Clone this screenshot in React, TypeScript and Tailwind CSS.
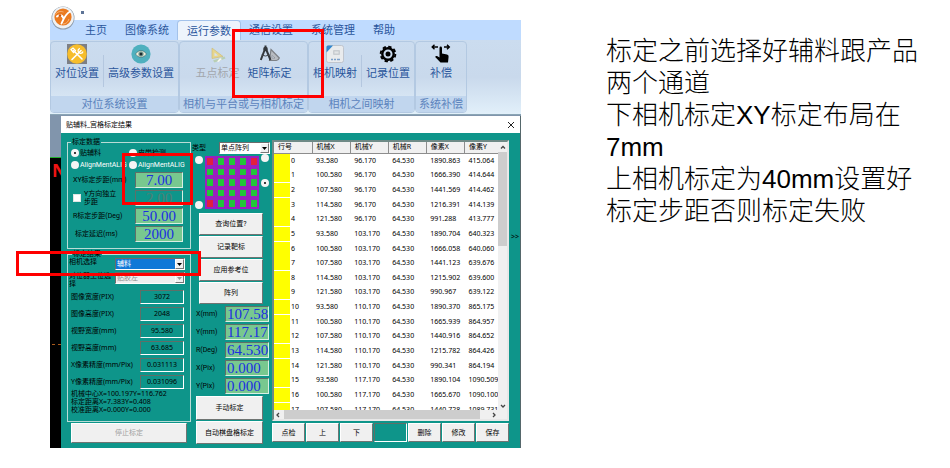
import { ReactNode } from 'react';
import clsx from 'clsx';

const tabs = ['主页', '图像系统', '运行参数', '通信设置', '系统管理', '帮助'];

const columns = ['行号', '机械X', '机械Y', '机械R', '像素X', '像素Y'];

const rows = [
  ['93.580', '96.170', '64.530', '1890.863', '415.064'],
  ['100.580', '96.170', '64.530', '1666.390', '414.644'],
  ['107.580', '96.170', '64.530', '1441.569', '414.462'],
  ['114.580', '96.170', '64.530', '1216.391', '414.139'],
  ['121.580', '96.170', '64.530', '991.288', '413.777'],
  ['93.580', '103.170', '64.530', '1890.704', '640.323'],
  ['100.580', '103.170', '64.530', '1666.058', '640.060'],
  ['107.580', '103.170', '64.530', '1441.123', '639.676'],
  ['114.580', '103.170', '64.530', '1215.902', '639.600'],
  ['121.580', '103.170', '64.530', '990.967', '639.122'],
  ['93.580', '110.170', '64.530', '1890.370', '865.175'],
  ['100.580', '110.170', '64.530', '1665.939', '864.957'],
  ['107.580', '110.170', '64.530', '1440.916', '864.652'],
  ['114.580', '110.170', '64.530', '1215.782', '864.426'],
  ['121.580', '110.170', '64.530', '990.341', '864.194'],
  ['93.580', '117.170', '64.530', '1890.104', '1090.509'],
  ['100.580', '117.170', '64.530', '1665.670', '1090.100'],
  ['107.580', '117.170', '64.530', '1440.728', '1089.731'],
];

const results = [
  ['图像宽度(PIX)', '3072'],
  ['图像高度(PIX)', '2048'],
  ['视野宽度(mm)', '95.580'],
  ['视野高度(mm)', '63.685'],
  ['X像素精度(mm/Pix)', '0.031113'],
  ['Y像素精度(mm/Pix)', '0.031096'],
];

const positions = [
  ['X(mm)', '107.58'],
  ['Y(mm)', '117.17'],
  ['R(Deg)', '64.530'],
  ['X(Pix)', '0.000'],
  ['Y(Pix)', '0.000'],
];

const Logo = () => (
  <svg viewBox="0 0 24 24" className="size-6">
    <circle cx="12" cy="12" r="11.5" fill="#8d9aa8" />
    <circle cx="12" cy="11.6" r="10.8" fill="#eef1f4" />
    <circle cx="12" cy="11" r="8.6" fill="#ea7a20" />
    <path d="M4.500 8.500c2-3 5-3.500 8-2.500M18 13c-1 3-3 5-6 5" stroke="#f7b57a" strokeWidth="1" fill="none" />
    <path d="M6 10.500c2.500-2.500 5.500-1.500 6.500 2M19 5.500c-4 2-6 6-8.500 12" stroke="#fff" strokeWidth="1.900" fill="none" strokeLinecap="round" />
    <circle cx="9" cy="9.500" r="1.200" fill="#c9540c" />
  </svg>
);

const ToolsIcon = () => (
  <svg viewBox="0 0 20 20" className="size-5">
    <rect width="20" height="20" fill="#7d7f84" />
    <circle cx="10" cy="10" r="9.800" fill="#f6bd2c" />
    <path d="M5 15.500 14 6.500M6.500 6.500l8.500 8.500" stroke="#fff" strokeWidth="1.600" strokeLinecap="round" />
    <path d="M4 5.500 6 4l2.500 2.500L6.500 8.500zM13 4.500a2.500 2.500 0 1 0 3 3" fill="none" stroke="#fff" strokeWidth="1.200" />
  </svg>
);

const EyeIcon = () => (
  <svg viewBox="0 0 20 20" className="size-5">
    <circle cx="10" cy="10" r="9.600" fill="#4fb0be" />
    <path d="M4.500 10c3-4.500 8-4.500 11 0-3 4.300-8 4.300-11 0z" fill="#f4f1dc" stroke="#35606a" strokeWidth=".6" />
    <circle cx="10" cy="10" r="2.700" fill="#7fa39a" />
    <circle cx="10" cy="10" r="1.500" fill="#1d2b30" />
  </svg>
);

const RulerIcon = () => (
  <svg viewBox="0 0 20 20" className="size-5">
    <path d="M4 4v10.500l11-2z" fill="#e6d58c" stroke="#cbbd80" strokeWidth=".7" />
    <path d="M6.500 8.500v3.500l3.500-.6z" fill="#d5e1f0" />
    <path d="m5 16.500 11.500-4 1 2-11 4z" fill="#b9cfb4" />
    <path d="m9 17.500 3-3.500 2 1-3.500 3z" fill="#f7f7f0" />
  </svg>
);

const CompassIcon = () => (
  <svg viewBox="0 0 20 20" className="size-5" fill="none">
    <path d="M11 5.500 19.300 14q-1 2.500-3 2.500H9.500z" fill="#b9bdc2" stroke="#7d8186" strokeWidth="1.200" />
    <path d="M12 11.500v2.500h3z" fill="#dce6f2" stroke="#7d8186" strokeWidth=".6" />
    <path d="M5.500 1.500v3M5 5 .8 16M6 5l4.500 11" stroke="#33373c" strokeWidth="2" />
    <path d="M1.500 11q4 2 8 0" stroke="#44484e" strokeWidth="1" />
    <circle cx="5.500" cy="5" r="2.300" fill="#33373c" />
  </svg>
);

const MapIcon = () => (
  <svg viewBox="0 0 20 20" className="size-5">
    <rect x="1.500" y="1.500" width="17" height="17" rx="2" fill="#e9ebed" stroke="#b9bec4" strokeWidth=".8" />
    <path d="M1.500 8.500V3q0-1.500 1.500-1.500h5z" fill="#2f86cf" />
    <rect x="8" y="6" width="7" height="5" rx="1" fill="#c9cdd1" />
    <rect x="9.500" y="7.500" width="4" height="2" fill="#e3e5e7" />
    <path d="M6 15.500h2m1 0h2m1 0h3" stroke="#7ba0cb" strokeWidth="1.600" />
  </svg>
);

const GearIcon = () => (
  <svg viewBox="0 0 20 20" className="size-5" fill="none" stroke="#000">
    <circle cx="10" cy="10" r="7.400" strokeWidth="1.800" strokeDasharray="3.400 2.410" />
    <circle cx="10" cy="10" r="5.700" strokeWidth="2.400" />
    <circle cx="10" cy="10" r="2.500" fill="#000" stroke="none" />
  </svg>
);

const HandIcon = () => (
  <svg viewBox="0 0 20 20" className="size-5">
    <path d="M8.500 4q0-1.400 1.200-1.400T11 4v5.500l5 1q1.800.4 1.600 2.200L17 18.500H9.500L4.200 13q.2-1.500 1.800-1l2.500 1.500z" fill="#000" />
    <path d="M1 3h6M13 3h5M3.500.8 1.200 3l2.300 2.200M16 .8 18.300 3 16 5.200" stroke="#000" strokeWidth="1.400" fill="none" />
  </svg>
);

interface RibbonGroupProps {
  label: string;
  children: ReactNode;
}

const RibbonGroup = ({ label, children }: RibbonGroupProps) => (
  <section className="flex flex-col border border-[#b3c9e2] rounded-sm overflow-hidden">
    <div className="flex justify-center h-[55px] pt-px">{children}</div>
    <h2 className="flex-1 px-[3px] text-center leading-4 text-[#5b83bd] bg-[#c1d6ee] whitespace-nowrap">{label}</h2>
  </section>
);

interface RibbonButtonProps {
  label: string;
  icon: ReactNode;
  disabled?: boolean;
}

const RibbonButton = ({ label, icon, disabled }: RibbonButtonProps) => (
  <button
    type="button"
    disabled={disabled}
    className="flex flex-col items-center gap-[2px] px-1 pt-px leading-[14px] whitespace-nowrap disabled:text-[#a3a7ad]"
  >
    {icon}
    {label}
  </button>
);

const Divider = () => <span className="w-px h-8 mt-3 bg-[#b4c7df]" />;

interface PushButtonProps {
  children?: ReactNode;
  className?: string;
  disabled?: boolean;
}

const PushButton = ({ children, className, disabled }: PushButtonProps) => (
  <button
    type="button"
    disabled={disabled}
    className={clsx(
      'border border-t-white border-l-white border-r-[#6f7472] border-b-[#6f7472] bg-[#f0f0f0] text-center whitespace-nowrap disabled:text-[#a0a0a0]',
      className,
    )}
  >
    {children}
  </button>
);

interface NumberFieldProps {
  id: string;
  value: string;
  className?: string;
  disabled?: boolean;
}

const NumberField = ({ id, value, className, disabled }: NumberFieldProps) => (
  <input
    id={id}
    type="text"
    defaultValue={value}
    disabled={disabled}
    className={clsx(
      "min-w-0 h-4 border border-t-[#5f6f68] border-l-[#5f6f68] border-r-[#d9efe4] border-b-[#d9efe4] bg-[#78c88f] font-['Liberation_Serif',serif] text-[15px] leading-[14px] text-[#1b2fe0] focus:outline-none disabled:bg-[#0e958a] disabled:text-[#4f8077]",
      className,
    )}
  />
);

interface DropDownProps {
  id: string;
  value: string;
  className?: string;
  selected?: boolean;
  disabled?: boolean;
}

const DropDown = ({ id, value, className, selected, disabled }: DropDownProps) => (
  <div className={clsx('relative h-3 border border-t-[#6b6b6b] border-l-[#6b6b6b] border-white bg-white', className)}>
    <select
      id={id}
      disabled={disabled}
      className={clsx(
        'block appearance-none w-full h-full px-px leading-[10px] focus:outline-none disabled:bg-[#efefef] disabled:text-[#8a8a8a]',
        selected && 'bg-[#0f78d7] text-white',
      )}
    >
      <option>{value}</option>
    </select>
    <span className="absolute right-0 inset-y-0 w-[9px] flex items-center justify-center bg-[#f0f0f0] border border-t-white border-l-white border-r-[#777] border-b-[#777] pointer-events-none">
      <svg viewBox="0 0 5 3" className="w-[5px] h-[3px]">
        <path d="M0 0h5L2.500 3z" fill={disabled ? '#999' : '#000'} />
      </svg>
    </span>
  </div>
);

interface RadioProps {
  name: string;
  label?: string;
  ariaLabel?: string;
  checked?: boolean;
  className?: string;
}

const Radio = ({ name, label, ariaLabel, checked, className }: RadioProps) => (
  <label className={clsx('flex items-center gap-px whitespace-nowrap', className)}>
    <input
      type="radio"
      name={name}
      aria-label={ariaLabel}
      defaultChecked={checked}
      className="appearance-none shrink-0 size-2 rounded-full border-[3px] border-[#f4f4f4] bg-[#f4f4f4] checked:bg-black"
    />
    {label}
  </label>
);

const CalibrationData = () => (
  <fieldset className="min-w-0 h-[111px] border border-[#b9dcd6] px-[3px] font-[Roboto,'Noto_Sans_CJK_SC',sans-serif]">
    <legend className="px-px leading-[8px]">标定数据</legend>
    <div className="grid grid-cols-2 pt-px leading-3">
      <Radio name="mode" label="贴辅料" checked />
      <Radio name="mode" label="皮带检测" />
      <Radio name="mode" label="AlignMentALIG" className="text-white" />
      <Radio name="mode" label="AlignMentALIG" className="text-white" />
    </div>
    <div className="grid grid-cols-[auto_48px] auto-rows-[18px] items-center pl-[2px] pr-1">
      <label htmlFor="xy-step">XY标定步距(mm)</label>
      <NumberField id="xy-step" value="7.00" className="text-center" />
      <label className="flex items-center gap-[3px] leading-[8px]">
        <input type="checkbox" className="appearance-none size-2 border border-[#dfe5e3] bg-white checked:bg-black" />
        <span>
          Y方向独立
          <br />
          步距
        </span>
      </label>
      <NumberField id="y-step" value="2.00" className="text-center" disabled />
      <label htmlFor="r-step">R标定步距(Deg)</label>
      <NumberField id="r-step" value="50.00" className="text-center" />
      <label htmlFor="delay" className="pl-[2px]">标定延迟(ms)</label>
      <NumberField id="delay" value="2000" className="text-center" />
    </div>
  </fieldset>
);

const CalibrationResult = () => (
  <fieldset className="min-w-0 h-[172px] border border-[#b9dcd6] px-px">
    <legend className="ml-[3px] px-px leading-[8px]">标定结果</legend>
    <div className="grid grid-cols-[1fr_70px] pr-1">
      <label htmlFor="camera" className="leading-[8px]">相机选择</label>
      <DropDown id="camera" value="辅料" selected />
      <label htmlFor="station" className="pt-[2px] leading-[8px] w-11">对位器工位选择</label>
      <DropDown id="station" value="贴胶左" className="mt-[2px]" disabled />
    </div>
    <dl className="grid grid-cols-[1fr_44px] auto-rows-[17px] items-center pl-[2px] pr-[5px]">
      {results.map(([label, value]) => (
        <div key={label} className="contents">
          <dt className="whitespace-nowrap">{label}</dt>
          <dd className="h-[14px] border border-t-[#5f6f68] border-l-[#5f6f68] border-r-white border-b-white text-center leading-3">
            {value}
          </dd>
        </div>
      ))}
    </dl>
    <p className="pl-[2px] leading-[8px] whitespace-nowrap">
      机械中心X=100.197Y=116.762
      <br />
      标定距离X=7.383Y=0.408
      <br />
      校准距离X=0.000Y=0.000
    </p>
  </fieldset>
);

const PointMatrix = () => (
  <div className="flex justify-center gap-[2px] leading-[8px]">
    <div className="flex flex-col justify-between pt-[2px]">
      <Radio name="corner" ariaLabel="左上" />
      <Radio name="corner" ariaLabel="左下" />
    </div>
    <div className="grid grid-cols-5 gap-x-[5px] gap-y-1 h-[53px] mt-[2px] bg-[#9a1fc0] p-[2px]">
      {Array.from({ length: 25 }, (_, i) => (
        <span key={i} className={clsx('w-[6px]', [0, 4, 20].includes(i) ? 'bg-[#e0203f]' : 'bg-[#22c63a]')} />
      ))}
    </div>
    <div className="flex flex-col gap-[17px]">
      <Radio name="corner" ariaLabel="右上" />
      <Radio name="corner" ariaLabel="右中" checked />
    </div>
  </div>
);

const ControlPanel = () => (
  <div className="flex flex-col min-w-0 pt-1 font-[Roboto,'Noto_Sans_CJK_SC',sans-serif]">
    <div className="flex items-center justify-between pr-px">
      <label htmlFor="array-type">类型</label>
      <DropDown id="array-type" value="单点阵列" className="w-[51px]" />
    </div>
    <div className="pl-px">
      <PointMatrix />
    </div>
    <div className="flex flex-col gap-px pl-[7px] pr-2 pt-1">
      <PushButton className="h-[22px]">查询位置?</PushButton>
      <PushButton className="h-[22px]">记录靶标</PushButton>
      <PushButton className="h-[22px]">应用参考位</PushButton>
      <PushButton className="h-[22px]">阵列</PushButton>
    </div>
    <div className="grid grid-cols-[1fr_44px] auto-rows-[18px] items-center pl-1 pr-[2px] pt-px">
      {positions.map(([label, value]) => (
        <div key={label} className="contents">
          <label htmlFor={label}>{label}</label>
          <NumberField id={label} value={value} className="pl-px" />
        </div>
      ))}
    </div>
    <div className="flex flex-col gap-px pl-1 pr-2 pt-px">
      <PushButton className="h-6">手动标定</PushButton>
      <PushButton className="h-[23px]">自动棋盘格标定</PushButton>
    </div>
  </div>
);

const Chevron = ({ d }: { d: string }) => (
  <svg viewBox="0 0 8 8" className="size-2" fill="none" stroke="#444" strokeWidth="1.300">
    <path d={d} />
  </svg>
);

const PointTable = () => (
  <div className="flex flex-col min-w-0 pt-[2px]">
    <div className="border-2 border-t-[#6f8a86] border-l-[#6f8a86] border-r-[#e8e8e8] border-b-[#e8e8e8] bg-white">
      <div className="flex h-[268px]">
        <div className="flex-1 min-w-0 overflow-hidden">
          <table className="w-full h-[275px] table-fixed border-collapse">
            <thead>
              <tr className="h-[11px] bg-[#f0f0f0]">
                {columns.map((column) => (
                  <th
                    key={column}
                    className="w-[17%] p-0 pl-1 text-left font-normal leading-[10px] border-r border-b border-[#8d8d8d] last:border-r-0 last:w-[15%]"
                  >
                    {column}
                  </th>
                ))}
              </tr>
            </thead>
            <tbody>
              {rows.map((row, i) => (
                <tr key={i}>
                  <th className="p-0 text-left font-normal">
                    <div className="flex items-center gap-px h-[14px] leading-[14px]">
                      <span className="w-4 h-[14px] bg-[#ffff00]" />
                      {i}
                    </div>
                  </th>
                  {row.map((value, j) => (
                    <td key={j} className="p-0 pl-1 leading-[14px] whitespace-nowrap">
                      {value}
                    </td>
                  ))}
                </tr>
              ))}
            </tbody>
          </table>
        </div>
        <div className="flex flex-col items-center w-[9px] bg-[#f0f0f0]">
          <span className="h-[10px] pt-px"><Chevron d="M2 5.500 4 3.500l2 2" /></span>
          <span className="w-full h-[94px] bg-[#cdcdcd]" />
          <span className="mt-auto"><Chevron d="M2 3l2 2 2-2" /></span>
        </div>
      </div>
      <div className="flex items-center h-[9px] bg-[#f0f0f0]">
        <Chevron d="M5 2 3 4l2 2" />
        <span className="ml-[2px] w-[84%] h-full bg-[#cdcdcd]" />
        <span className="ml-auto mr-[9px]"><Chevron d="m3 2 2 2-2 2" /></span>
      </div>
    </div>
    <div className="grid grid-cols-7 gap-px pt-[2px] h-[21px]">
      <PushButton>点检</PushButton>
      <PushButton>上</PushButton>
      <PushButton>下</PushButton>
      <span className="border border-t-[#5f6f68] border-l-[#5f6f68] border-r-white border-b-white" />
      <PushButton>删除</PushButton>
      <PushButton>修改</PushButton>
      <PushButton>保存</PushButton>
    </div>
  </div>
);

const CalibrationDialog = () => (
  <div className="relative flex-1 min-w-0 border-r border-[#55676b] text-[7px] leading-[10px] text-black">
    <header className="flex items-center justify-between h-[17px] pl-[5px] pr-[5px] bg-white">
      <h1>贴辅料_宫格标定结果</h1>
      <button type="button" aria-label="关闭">
        <svg viewBox="0 0 8 8" className="size-2" stroke="#222" strokeWidth="1">
          <path d="m1 1 6 6M7 1 1 7" />
        </svg>
      </button>
    </header>
    <div className="grid grid-cols-[124fr_79fr_237fr_10px] gap-px pl-[6px] pt-[5px] pb-1 bg-[#0e958a]">
      <div className="flex flex-col gap-px min-w-0">
        <CalibrationData />
        <CalibrationResult />
        <PushButton className="h-5 ml-1 mr-1" disabled>停止标定</PushButton>
      </div>
      <ControlPanel />
      <PointTable />
      <button type="button" aria-label="展开" className="self-start pt-[94px]">&gt;&gt;</button>
    </div>
  </div>
);

const Ribbon = () => (
  <div className="text-[11px] text-[#2a569c]">
    <nav className="flex pl-[26px] h-5 bg-[#bfdbff]">
      {tabs.map((tab) => (
        <button
          key={tab}
          type="button"
          className={clsx(
            'px-[9px] leading-5 whitespace-nowrap',
            tab === '运行参数' && '-mx-px bg-[#edf4fc] border-x border-t border-[#a3c2ea] rounded-t-sm',
          )}
        >
          {tab}
        </button>
      ))}
    </nav>
    <div className="flex h-[75px] py-px bg-linear-to-b from-[#cbdcef] via-[#c9d9ec] to-[#e2f0fa] border-b border-[#8aa5b5]">
      <RibbonGroup label="对位系统设置">
        <RibbonButton label="对位设置" icon={<ToolsIcon />} />
        <Divider />
        <RibbonButton label="高级参数设置" icon={<EyeIcon />} />
      </RibbonGroup>
      <RibbonGroup label="相机与平台或与相机标定">
        <RibbonButton label="五点标定" icon={<RulerIcon />} disabled />
        <RibbonButton label="矩阵标定" icon={<CompassIcon />} />
      </RibbonGroup>
      <RibbonGroup label="相机之间映射">
        <RibbonButton label="相机映射" icon={<MapIcon />} />
        <Divider />
        <RibbonButton label="记录位置" icon={<GearIcon />} />
      </RibbonGroup>
      <RibbonGroup label="系统补偿">
        <RibbonButton label="补偿" icon={<HandIcon />} />
      </RibbonGroup>
    </div>
  </div>
);

const App = () => (
  <main className="grid grid-cols-[3fr_2fr] gap-[85px] items-start min-h-screen pt-5 pb-5 pl-[50px] pr-[30px] bg-white font-['Noto_Sans','Noto_Sans_CJK_SC',sans-serif]">
    <figure className="relative min-w-0">
      <Ribbon />
      <div className="flex pt-px bg-[#8195ac]">
        <div className="w-[11px] pt-[41px]">
          <div className="h-full border-t border-[#1fae2c] bg-black pl-[2px] text-lg leading-6 font-bold text-[#f01414]">
            N
            <div className="mt-[162px] border-t border-dashed border-[#a85a1c]" />
          </div>
        </div>
        <CalibrationDialog />
      </div>

      <div className="absolute left-px -top-[14px]"><Logo /></div>
      <span className="absolute left-[31px] -top-[9px] size-[3px] bg-[#5d7396]" />

      {/* highlight boxes */}
      <div className="absolute left-[182px] top-[9px] w-[92px] h-[69px] border-3 border-[#ff0000]" />
      <div className="absolute left-[72px] top-[133px] w-[71px] h-[52px] border-3 border-[#ff0000]" />
      <div className="absolute -left-[34px] top-[231px] w-[185px] h-[25px] border-3 border-[#ff0000]" />
    </figure>

    <article className="mt-[15px] font-['Liberation_Sans','Noto_Sans_CJK_SC',sans-serif] text-[26px] leading-8 font-light text-black">
      <p>标定之前选择好辅料跟产品两个通道</p>
      <p>下相机标定XY标定布局在7mm</p>
      <p>上相机标定为40mm设置好标定步距否则标定失败</p>
    </article>
  </main>
);

export default App;
